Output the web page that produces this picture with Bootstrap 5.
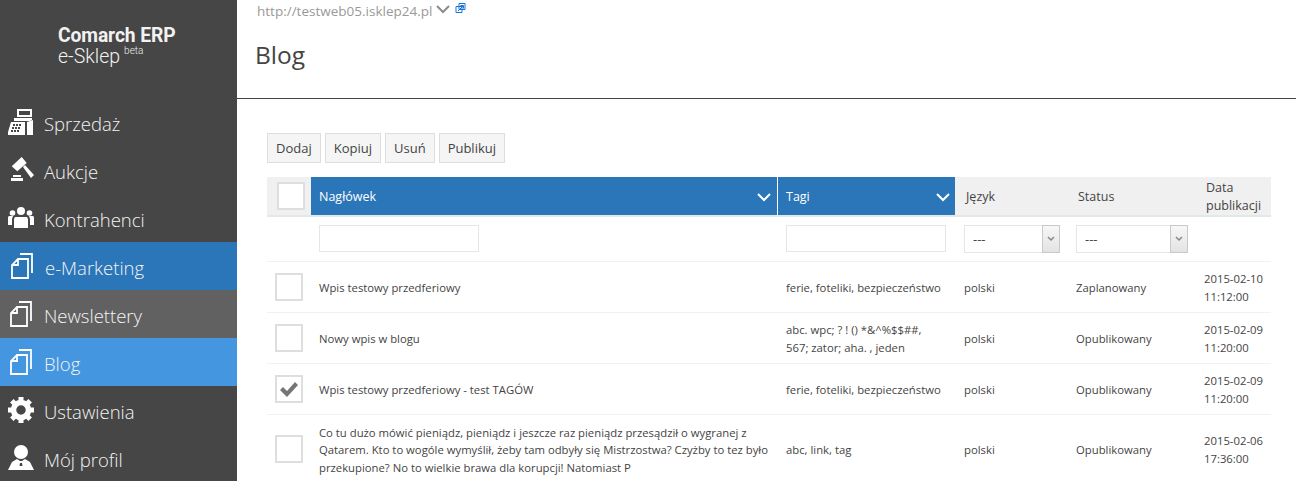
<!DOCTYPE html>
<html lang="pl">
<head>
<meta charset="utf-8">
<title>Blog</title>
<link href="https://cdn.jsdelivr.net/npm/bootstrap@5.3.0/dist/css/bootstrap.min.css" rel="stylesheet">
<style>
html,body{height:481px;overflow:hidden}
body{font-family:"Open Sans",sans-serif;color:#444;background:#fff}
.app-side{width:237px;height:481px;background:#464646;flex:none;overflow:hidden}
.brand-box{height:98px;padding:25px 0 0 58px;font-family:Roboto,sans-serif;color:#f2f2f2;line-height:21px}
.brand-box b{display:block;font-size:19.3px;font-weight:700;letter-spacing:-.1px}
.brand-box span{font-size:19.500px;font-weight:300}
.brand-box sup{font-size:10px;top:-9px;margin-left:4px;vertical-align:baseline;position:relative}
.side-link{display:flex;align-items:center;height:48px;padding-top:4px;color:#f4f4f4;font-size:18.500px;font-weight:300;text-decoration:none;line-height:44px}
.side-link svg{width:26px;height:26px;margin:0 10px 4px 8px;flex:none;fill:#fff}
.side-link svg.doc-ico{width:24px;margin:0 11px 4px 9px}
.side-link.lvl1 svg.doc-ico{margin-left:10px}
.side-link.lvl1{background:#2b76b9}
.side-link.lvl2{background:#616161}
.side-link.lvl3{background:#4596e0}
.doc-ico path{fill:none;stroke:#fff;stroke-width:1.800}
.main-pane{flex:1;min-width:0}
.site-url{height:20px;padding:1px 0 0 20px;font-size:13.500px;font-weight:400;color:#999;line-height:20px}
.site-url svg{vertical-align:top}
.page-title{padding:18px 0 0 18px;margin:0;font-size:24.500px;font-weight:400;line-height:34px;color:#444;border-bottom:1px solid #444;box-sizing:content-box;height:60px}
.tool-row{padding:34px 0 14px 30px;gap:4px}
.tool-btn{height:30px;padding:0 8px;border:1px solid #ddd;background:#f5f5f5;color:#444;font-size:13px;line-height:28px;border-radius:0}
.grid-wrap{padding:0 25px 0 30px}
.blog-grid{table-layout:fixed;width:1004px;margin:0;border-collapse:collapse;font-size:11.300px;color:#444}
.blog-grid th,.blog-grid td{padding:2px 4px 0 9px;vertical-align:middle;border:0;color:#444;background:transparent;box-shadow:none}
.blog-grid td:nth-child(2){padding-left:8px}
.blog-grid thead th{height:39px;background:#f0f0f0;font-size:12.500px;font-weight:400;line-height:18px;border-bottom:2px solid #e3e8ea}
.blog-grid thead th.c-on{background:#2b76b9;color:#fff;padding-left:8px;padding-right:6px}
.blog-grid thead th.c-on+th.c-on{box-shadow:inset 1px 0 #fff;padding-left:9px;padding-right:5px}
.head-in{display:flex;justify-content:space-between;align-items:center}
.blog-grid thead th.ch{padding:0 0 0 10px}
.blog-grid tbody tr.filter-row td{height:45px;padding:0 0 0 8px}
.blog-grid tbody tr.filter-row td.tag-f{padding-left:9px}
.blog-grid tbody tr td{border-bottom:1px solid #f2f2f2;line-height:17.500px}
.filter-in{display:block;width:160px;height:27px;border:1px solid #e6e6e6;background:#fff;border-radius:0;padding:0}
.pick-box{display:flex;height:28px;border:1px solid #e6e6e6;background:#fff;margin:1px 0 0 1px}
.pick-box.w-lang{width:96px}
.pick-box.w-stat{width:112px}
.pick-box select{flex:1;min-width:0;border:0;appearance:none;background:transparent;font-size:13px;padding:0 0 0 8px;color:#444;font-family:inherit}
.pick-arrow{width:18px;border:1px solid #c9c9c9;background:linear-gradient(#f7f7f7,#e3e3e3);display:flex;align-items:center;justify-content:center;margin:-1px}
.tick-box{display:flex;align-items:center;justify-content:center;width:28px;height:28px;border:2px solid #dedede;background:#fff;margin-left:8px}
.blog-grid tbody td.first{padding:0}
.row-a td,.row-b td,.row-c td{height:51px}
.row-d td{height:70px}
.blog-grid tbody td.date-cell{line-height:18px;padding-left:8px;padding-right:0;white-space:nowrap}
</style>
</head>
<body>
<div class="d-flex">
  <aside class="app-side">
    <div class="brand-box"><b>Comarch ERP</b><span>e-Sklep<sup>beta</sup></span></div>
    <nav>
      <a class="side-link" href="#"><svg viewBox="0 0 26 26"><path fill-rule="evenodd" d="M9 0h15v8H9zM11 2v4h11V2zM6 9h18v3H6zM3 13h14v13H0v-3zM19 13l6-2v15h-6z"/><g fill="#464646"><rect x="5" y="15" width="2" height="2"/><rect x="8" y="15" width="2" height="2"/><rect x="11" y="15" width="2" height="2"/><rect x="4" y="18" width="2" height="2"/><rect x="7" y="18" width="2" height="2"/><rect x="10" y="18" width="2" height="2"/><rect x="3" y="21" width="2" height="2"/><rect x="6" y="21" width="2" height="2"/><rect x="9" y="21" width="2" height="2"/></g></svg>Sprzedaż</a>
      <a class="side-link" href="#"><svg viewBox="0 0 26 26"><path d="M13.700 0L18.700 6 9.300 14.300 3.700 9.300zM15 10l2-2 9 10-3 3zM5 18h8v2H5zM3 21h12v3H3z"/></svg>Aukcje</a>
      <a class="side-link" href="#"><svg viewBox="0 0 26 26"><circle cx="13" cy="6" r="4"/><circle cx="4.500" cy="8" r="2.800"/><circle cx="21.500" cy="8" r="2.800"/><path d="M7 12h12l1 2v9H6v-9zM0 13c0-2 1-2 2-2h3l-1 3v6H0zM26 13c0-2-1-2-2-2h-3l1 3v6h4z"/></svg>Kontrahenci</a>
      <a class="side-link lvl1" href="#"><svg class="doc-ico" viewBox="0 0 24 26"><path d="M10 1h12v19M8 6h10v19H2V12zM2 12h6V6"/></svg>e-Marketing</a>
      <a class="side-link lvl2" href="#"><svg class="doc-ico" viewBox="0 0 24 26"><path d="M10 1h12v19M8 6h10v19H2V12zM2 12h6V6"/></svg>Newslettery</a>
      <a class="side-link lvl3" href="#"><svg class="doc-ico" viewBox="0 0 24 26"><path d="M10 1h12v19M8 6h10v19H2V12zM2 12h6V6"/></svg>Blog</a>
      <a class="side-link" href="#"><svg viewBox="0 0 26 26"><circle cx="13" cy="13" r="7.500" fill="none" stroke="#fff" stroke-width="5.500"/><g><rect x="10.500" y="0" width="5" height="5"/><rect x="10.500" y="0" width="5" height="5" transform="rotate(45 13 13)"/><rect x="10.500" y="0" width="5" height="5" transform="rotate(90 13 13)"/><rect x="10.500" y="0" width="5" height="5" transform="rotate(135 13 13)"/><rect x="10.500" y="0" width="5" height="5" transform="rotate(180 13 13)"/><rect x="10.500" y="0" width="5" height="5" transform="rotate(225 13 13)"/><rect x="10.500" y="0" width="5" height="5" transform="rotate(270 13 13)"/><rect x="10.500" y="0" width="5" height="5" transform="rotate(315 13 13)"/></g></svg>Ustawienia</a>
      <a class="side-link" href="#"><svg viewBox="0 0 26 26"><circle cx="13" cy="7" r="7"/><path fill-rule="evenodd" d="M9 14l3 2h2l3-2 5 3 4 8H0l4-8zM12 18l-.5 3h3L14 18z"/></svg>Mój profil</a>
    </nav>
  </aside>
  <main class="main-pane">
    <div class="site-url">http://testweb05.isklep24.pl <svg width="14" height="12" viewBox="0 0 14 12" style="margin-top:3px"><path d="M1 2l6 6 6-6" fill="none" stroke="#8c8c8c" stroke-width="2"/></svg> <svg width="11" height="11" viewBox="0 0 11 11" style="margin-top:2px;margin-left:2px"><path d="M4 .5h6v6H4zM1 3.500h6v6H1z" fill="#fff" stroke="#1a73d8" stroke-width="1"/><path d="M3 8l5-5M5.500 2.500h3v3" fill="none" stroke="#1a73d8"/></svg></div>
    <h1 class="page-title">Blog</h1>
    <div class="d-flex tool-row">
      <button type="button" class="btn tool-btn">Dodaj</button>
      <button type="button" class="btn tool-btn">Kopiuj</button>
      <button type="button" class="btn tool-btn">Usuń</button>
      <button type="button" class="btn tool-btn">Publikuj</button>
    </div>
    <div class="grid-wrap">
      <table class="table blog-grid">
        <colgroup><col style="width:44px"><col style="width:466px"><col style="width:178px"><col style="width:112px"><col style="width:129px"><col style="width:75px"></colgroup>
        <thead>
          <tr>
            <th class="ch"><span class="tick-box" style="margin-left:0"></span></th>
            <th class="c-on"><div class="head-in">Nagłówek<svg width="14" height="9" viewBox="0 0 14 9"><path d="M1 1l6 6 6-6" fill="none" stroke="#fff" stroke-width="2"/></svg></div></th>
            <th class="c-on"><div class="head-in">Tagi<svg width="14" height="9" viewBox="0 0 14 9"><path d="M1 1l6 6 6-6" fill="none" stroke="#fff" stroke-width="2"/></svg></div></th>
            <th style="padding-left:11px">Język</th>
            <th style="padding-left:11px">Status</th>
            <th style="padding-left:10px">Data publikacji</th>
          </tr>
        </thead>
        <tbody>
          <tr class="filter-row">
            <td></td>
            <td><input class="filter-in" type="text" aria-label="Nagłówek"></td>
            <td class="tag-f"><input class="filter-in" type="text" aria-label="Tagi"></td>
            <td><div class="pick-box w-lang"><select aria-label="Język"><option>---</option></select><span class="pick-arrow"><svg width="8" height="6" viewBox="0 0 8 6"><path d="M1 1l3 3 3-3" fill="none" stroke="#888" stroke-width="1.500"/></svg></span></div></td>
            <td><div class="pick-box w-stat"><select aria-label="Status"><option>---</option></select><span class="pick-arrow"><svg width="8" height="6" viewBox="0 0 8 6"><path d="M1 1l3 3 3-3" fill="none" stroke="#888" stroke-width="1.500"/></svg></span></div></td>
            <td></td>
          </tr>
          <tr class="row-a">
            <td class="first"><span class="tick-box"></span></td>
            <td>Wpis testowy przedferiowy</td>
            <td>ferie, foteliki, bezpieczeństwo</td>
            <td>polski</td>
            <td>Zaplanowany</td>
            <td class="date-cell">2015-02-10<br>11:12:00</td>
          </tr>
          <tr class="row-b">
            <td class="first"><span class="tick-box"></span></td>
            <td>Nowy wpis w blogu</td>
            <td>abc. wpc; ? ! () *&amp;^%$$##,<br>567; zator; aha. , jeden</td>
            <td>polski</td>
            <td>Opublikowany</td>
            <td class="date-cell">2015-02-09<br>11:20:00</td>
          </tr>
          <tr class="row-c">
            <td class="first"><span class="tick-box"><svg width="20" height="16" viewBox="0 0 20 16"><path d="M1 9l3-3 4 4 8-9 3 3-11 12z" fill="#757575"/></svg></span></td>
            <td>Wpis testowy przedferiowy - test TAGÓW</td>
            <td>ferie, foteliki, bezpieczeństwo</td>
            <td>polski</td>
            <td>Opublikowany</td>
            <td class="date-cell">2015-02-09<br>11:20:00</td>
          </tr>
          <tr class="row-d">
            <td class="first"><span class="tick-box"></span></td>
            <td>Co tu dużo mówić pieniądz, pieniądz i jeszcze raz pieniądz przesądził o wygranej z Qatarem. Kto to wogóle wymyślił, żeby tam odbyły się Mistrzostwa? Czyżby to tez było przekupione? No to wielkie brawa dla korupcji! Natomiast P</td>
            <td>abc, link, tag</td>
            <td>polski</td>
            <td>Opublikowany</td>
            <td class="date-cell">2015-02-06<br>17:36:00</td>
          </tr>
        </tbody>
      </table>
    </div>
  </main>
</div>
<script src="https://cdn.jsdelivr.net/npm/bootstrap@5.3.0/dist/js/bootstrap.bundle.min.js"></script>
</body>
</html>
